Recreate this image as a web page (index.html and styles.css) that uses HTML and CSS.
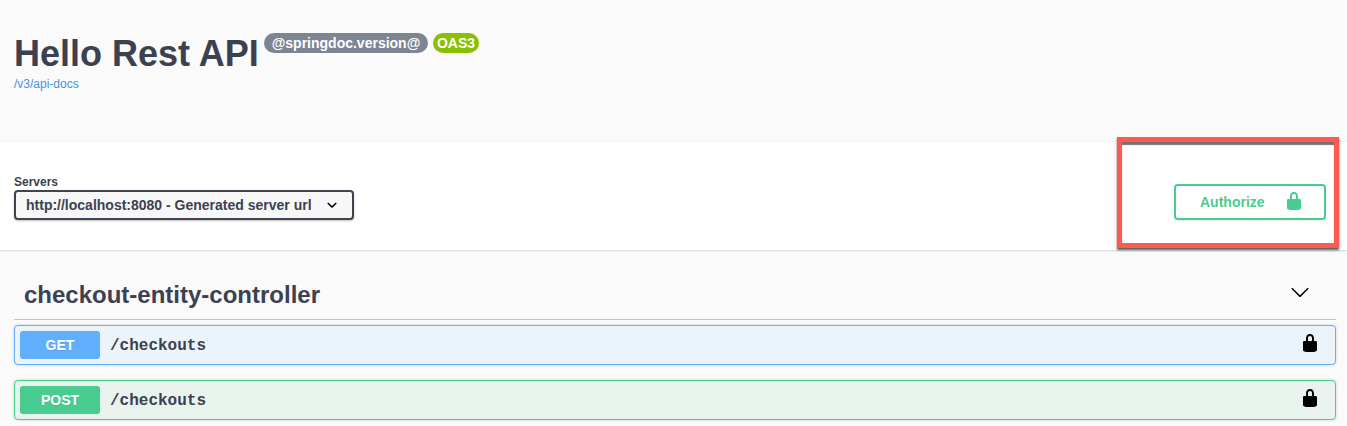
FILE: index.html
```html
<!DOCTYPE html>
<html lang="en">
<head>
<meta charset="utf-8">
<title>Hello Rest API</title>
<link rel="stylesheet" href="styles.css">
</head>
<body>
<svg width="0" height="0" class="defs">
  <symbol id="lock" viewBox="0 0 20 20"><path d="M15.8 8H14V5.6C14 2.703 12.665 1 10 1 7.334 1 6 2.703 6 5.6V8H4c-.553 0-1 .646-1 1.199V17c0 .549.428 1.139.951 1.307l1.197.387C5.672 18.861 6.55 19 7.1 19h5.8c.549 0 1.428-.139 1.951-.307l1.196-.387c.524-.167.953-.757.953-1.306V9.199C17 8.646 16.352 8 15.8 8zM12 8H8V5.199C8 3.754 8.797 3 10 3c1.203 0 2 .754 2 2.199V8z"/></symbol>
  <symbol id="arrow" viewBox="0 0 20 20"><path d="M17.418 6.109c.272-.268.709-.268.979 0s.271.701 0 .969l-7.908 7.83c-.27.268-.707.268-.979 0l-7.908-7.83c-.27-.268-.27-.701 0-.969.271-.268.709-.268.979 0L10 13.25l7.418-7.141z"/></symbol>
  <symbol id="select-arrow" viewBox="0 0 20 20"><path d="M13.418 7.859c.271-.268.709-.268.978 0 .27.268.272.701 0 .969l-3.908 3.83c-.27.268-.707.268-.979 0l-3.908-3.83c-.27-.267-.27-.701 0-.969.271-.268.709-.268.978 0L10 11l3.418-3.141z"/></symbol>
</svg>
<header class="info">
  <div class="title-row">
    <h1 class="title">Hello Rest API</h1>
    <span class="badge version">@springdoc.version@</span>
    <span class="badge oas">OAS3</span>
  </div>
  <a class="docs-link">/v3/api-docs</a>
</header>
<section class="schemes">
  <div class="servers">
    <span class="servers-label">Servers</span>
    <div class="select"><span class="select-text">http://localhost:8080 - Generated server url</span><svg class="icon"><use href="#select-arrow"/></svg></div>
  </div>
  <button class="authorize"><span class="authorize-text">Authorize</span><svg class="icon"><use href="#lock"/></svg></button>
  <div class="highlight"></div>
</section>
<main class="operations">
  <div class="tag"><h2 class="tag-name">checkout-entity-controller</h2><svg class="icon"><use href="#arrow"/></svg></div>
  <div class="op get"><span class="method">GET</span><span class="path">/checkouts</span><svg class="icon"><use href="#lock"/></svg></div>
  <div class="op post"><span class="method">POST</span><span class="path">/checkouts</span><svg class="icon"><use href="#lock"/></svg></div>
</main>
</body>
</html>
```
FILE: styles.css
```css
* { box-sizing: border-box; }
body {
  margin: 0;
  height: 426px;
  overflow: hidden;
  background: #fafafa;
  color: #3b4151;
  font-family: "Liberation Sans", Arial, sans-serif;
}
.defs { position: absolute; }
.icon { width: 20px; height: 20px; flex: none; }
.info { height: 142px; padding: 33px 14px 0; }
.title-row { display: flex; align-items: flex-start; height: 42px; }
.title { margin: 0 5px 0 0; width: 245px; font-size: 36px; line-height: 41px; white-space: nowrap; }
.badge {
  height: 20px;
  border-radius: 10px;
  color: #fff;
  font-size: 14px;
  font-weight: bold;
  line-height: 20px;
  text-align: center;
  white-space: nowrap;
}
.version { width: 164px; margin-right: 5px; background: #7d8492; }
.oas { width: 46px; background: #89bf04; }
.docs-link { display: block; color: #4990e2; font-size: 12px; line-height: 18px; }
.schemes {
  position: relative;
  display: flex;
  justify-content: space-between;
  height: 108px;
  padding: 33px 21px 0 14px;
  background: #fff;
  box-shadow: 0 1px 2px rgba(0, 0, 0, .15);
}
.servers-label { display: block; height: 15px; font-size: 12px; font-weight: bold; line-height: 14px; }
.select {
  display: flex;
  align-items: center;
  width: 340px;
  height: 30px;
  padding-left: 10px;
  border: 2px solid #41444e;
  border-radius: 4px;
  background: #f7f7f7;
  box-shadow: 0 1px 2px rgba(0, 0, 0, .25);
  font-size: 14px;
  font-weight: bold;
}
.select-text { width: 296px; white-space: nowrap; }
.authorize {
  display: flex;
  width: 152px;
  height: 36px;
  margin: 9px 0 0;
  padding: 5px 0 0 24px;
  border: 2px solid #49cc90;
  border-radius: 4px;
  background: transparent;
  box-shadow: 0 1px 2px rgba(0, 0, 0, .1);
  color: #49cc90;
  fill: #49cc90;
  font: bold 14px "Liberation Sans", Arial, sans-serif;
}
.authorize-text { width: 84px; line-height: 22px; text-align: left; }
/* Callout frame drawn over the section edges */
.highlight {
  position: absolute;
  top: -5px;
  right: 8px;
  width: 222px;
  height: 111px;
  border: 5px solid #ff5a4f;
  box-shadow: 0 2px 2px rgba(0, 0, 0, .65), inset 0 3px 1px rgba(0, 0, 0, .55);
}
.operations { padding: 20px 11px 0 14px; }
.tag {
  display: flex;
  align-items: center;
  justify-content: space-between;
  height: 50px;
  margin-bottom: 5px;
  padding: 0 26px 0 10px;
  border-bottom: 1px solid rgba(59, 65, 81, .3);
}
.tag-name { margin: 0; font-size: 24px; line-height: 28px; }
.tag .icon { margin-top: -6px; }
.op {
  display: flex;
  align-items: center;
  height: 40px;
  margin-bottom: 15px;
  padding: 0 15px 0 5px;
  border: 1px solid;
  border-radius: 4px;
  box-shadow: 0 0 3px rgba(0, 0, 0, .19);
}
.get { border-color: #61affe; background: #ebf3fb; }
.post { border-color: #49cc90; background: #e8f3ed; }
.method {
  width: 80px;
  height: 28px;
  border-radius: 3px;
  color: #fff;
  font-size: 14px;
  font-weight: bold;
  line-height: 28px;
  text-align: center;
  text-shadow: 0 1px 0 rgba(0, 0, 0, .1);
}
.get .method { background: #61affe; }
.post .method { background: #49cc90; }
.path { flex: 1; padding: 2px 0 0 10px; font: bold 16px "Liberation Mono", monospace; }
.op .icon { fill: #000; margin-top: -4px; }
```
